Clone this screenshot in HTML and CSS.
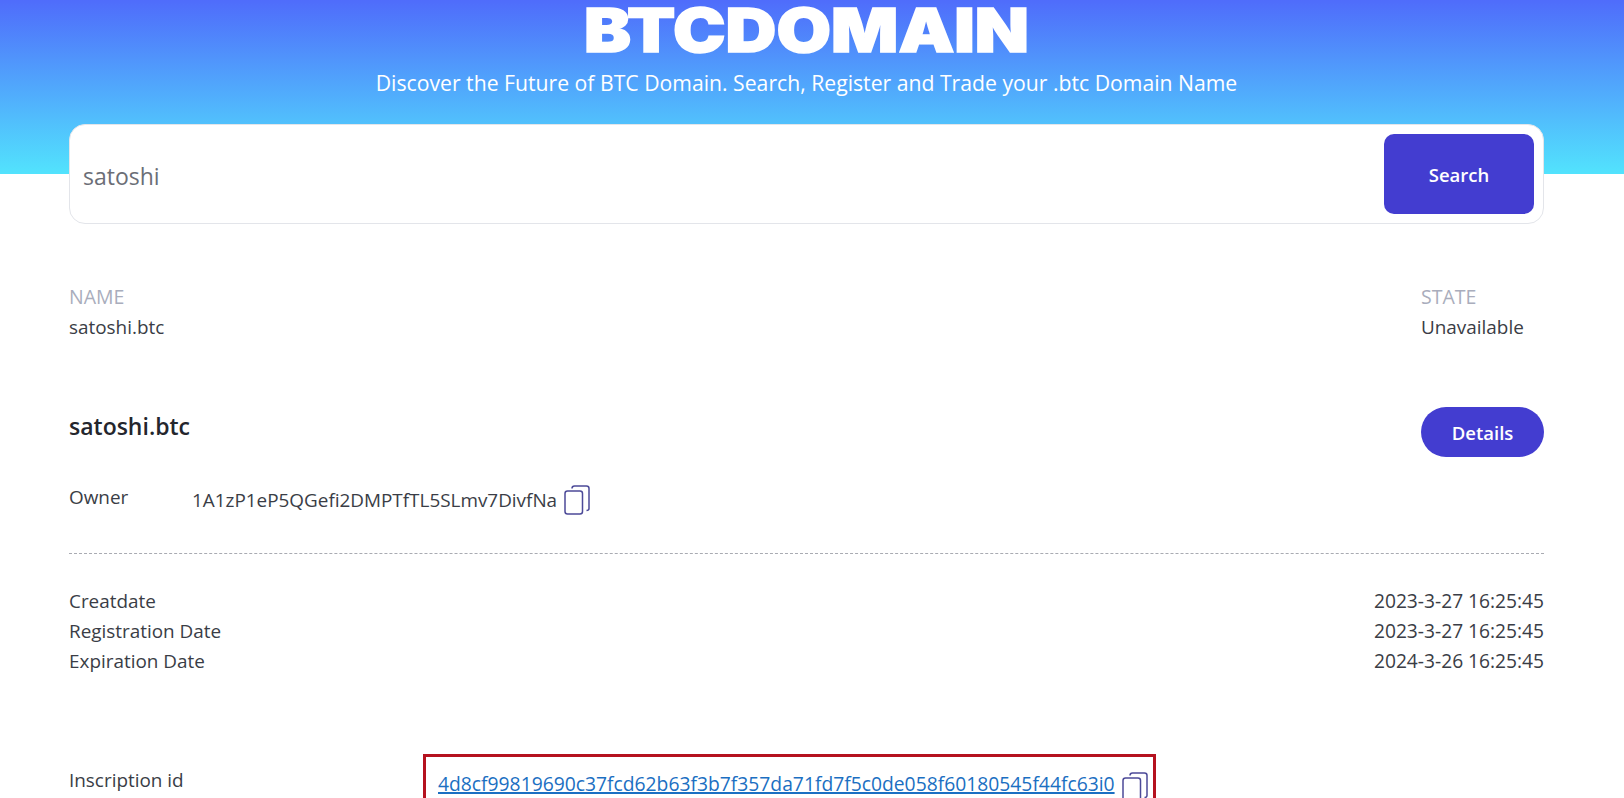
FILE: index.html
```html
<!DOCTYPE html>
<html lang="en">
<head>
<meta charset="utf-8">
<title>BTCDomain</title>
<link rel="stylesheet" href="styles.css">
</head>
<body>
<svg class="defs" width="0" height="0" aria-hidden="true"><symbol id="copy" viewBox="0 0 26 30"><path d="M8 3.5Q8 1 10.500 1H22.500Q25 1 25 3.500V23.500Q25 25.500 22.500 25.500" fill="none" stroke="currentColor" stroke-width="1.500"/><rect x="1" y="6" width="17.500" height="23" rx="2.500" fill="#fff" stroke="currentColor" stroke-width="1.500"/></symbol></svg>
<header class="hero">
  <svg class="logo" viewBox="0 0 447 50" role="img" aria-label="BTCDOMAIN"><text class="logo-text" x="1" y="47" textLength="445" lengthAdjust="spacingAndGlyphs">BTCDOMAIN</text></svg>
  <p class="tagline">Discover the Future of BTC Domain. Search, Register and Trade your .btc Domain Name</p>
</header>
<main class="content">
  <form class="search">
    <span class="search-input">satoshi</span>
    <span class="search-btn">Search</span>
  </form>
  <section class="summary">
    <div><div class="label">NAME</div><div class="value">satoshi.btc</div></div>
    <div class="state"><div class="label">STATE</div><div class="value">Unavailable</div></div>
  </section>
  <section class="title-row">
    <h2 class="title">satoshi.btc</h2>
    <span class="details">Details</span>
  </section>
  <div class="owner">
    <span class="owner-key">Owner</span>
    <span class="owner-val">1A1zP1eP5QGefi2DMPTfTL5SLmv7DivfNa</span>
    <svg class="copy"><use href="#copy"/></svg>
  </div>
  <hr class="divider">
  <dl class="dates">
    <div class="date-row"><dt>Creatdate</dt><dd>2023-3-27 16:25:45</dd></div>
    <div class="date-row"><dt>Registration Date</dt><dd>2023-3-27 16:25:45</dd></div>
    <div class="date-row"><dt>Expiration Date</dt><dd>2024-3-26 16:25:45</dd></div>
  </dl>
  <div class="inscription">
    <span class="ins-key">Inscription id</span>
    <div class="ins-box">
      <a class="ins-link" href="#">4d8cf99819690c37fcd62b63f3b7f357da71fd7f5c0de058f60180545f44fc63i0</a>
      <svg class="copy ins-copy"><use href="#copy"/></svg>
    </div>
  </div>
</main>
</body>
</html>
```

FILE: styles.css
```css
html, body { margin: 0; height: 798px; overflow: hidden; background: #fff; }
body { font-family: "Open Sans", "Noto Sans", sans-serif; color: #3a3d46; font-size: 18.900px; }
.defs { position: absolute; }
.hero { height: 174px; box-sizing: border-box; padding: 5px 80px 0 69px; background: linear-gradient(180deg, #4f6cfb 0%, #52e3fd 100%); text-align: center; color: #fff; }
.logo { display: block; width: 447px; height: 50px; margin: 0 auto; }
.logo-text { font-family: "Inter", sans-serif; font-weight: 900; font-size: 60px; fill: #fff; stroke: #fff; stroke-width: 1.500px; }
.tagline { margin: 14px 0 0; font-size: 21.200px; line-height: 28px; }
.content { padding: 0 80px 0 69px; margin-top: -50px; }
.search { height: 100px; box-sizing: border-box; display: flex; align-items: center; justify-content: space-between; background: #fff; border: 1px solid #e3e5ea; border-radius: 16px; padding: 0 9px 0 13px; }
.search-input { font-size: 23px; color: #6b6e76; position: relative; top: 2px; }
.search-btn { width: 150px; height: 80px; display: flex; align-items: center; justify-content: center; background: #433dd0; color: #fff; border-radius: 10px; font-size: 18.500px; font-weight: 600; }
.summary { display: flex; justify-content: space-between; margin-top: 58px; line-height: 30px; }
.state { width: 123px; }
.label { color: #a9adbc; font-size: 19.500px; }
.title-row { display: flex; justify-content: space-between; margin-top: 65px; }
.title { margin: 3px 0 0; font-size: 23px; font-weight: 600; line-height: 32px; color: #24262d; }
.details { width: 123px; height: 50px; display: flex; align-items: center; justify-content: center; background: #433dd0; color: #fff; border-radius: 25px; font-weight: 600; font-size: 18.500px; }
.owner { display: flex; align-items: center; margin-top: 26px; height: 34px; }
.owner-key { width: 123px; margin-top: -6px; }
.copy { width: 26px; height: 30px; color: #4c4a98; margin-left: 7px; }
.divider { border: 0; border-top: 1px dashed #a9abb2; margin: 36px 0 0; }
.dates { margin: 32px 0 0; line-height: 30px; }
.date-row { display: flex; justify-content: space-between; }
.date-row dd { margin: 0; font-size: 19.200px; }
.inscription { display: flex; margin-top: 78px; }
.ins-key { width: 354px; padding-top: 13px; }
.ins-box { width: 733px; height: 80px; box-sizing: border-box; border: 3px solid #b5121f; padding: 13px 0 0 12px; display: flex; align-items: flex-start; font-size: 19.300px; }
.ins-link { color: #1b6fc2; text-decoration-thickness: 2px; }
.ins-copy { margin-top: 2px; }
```
